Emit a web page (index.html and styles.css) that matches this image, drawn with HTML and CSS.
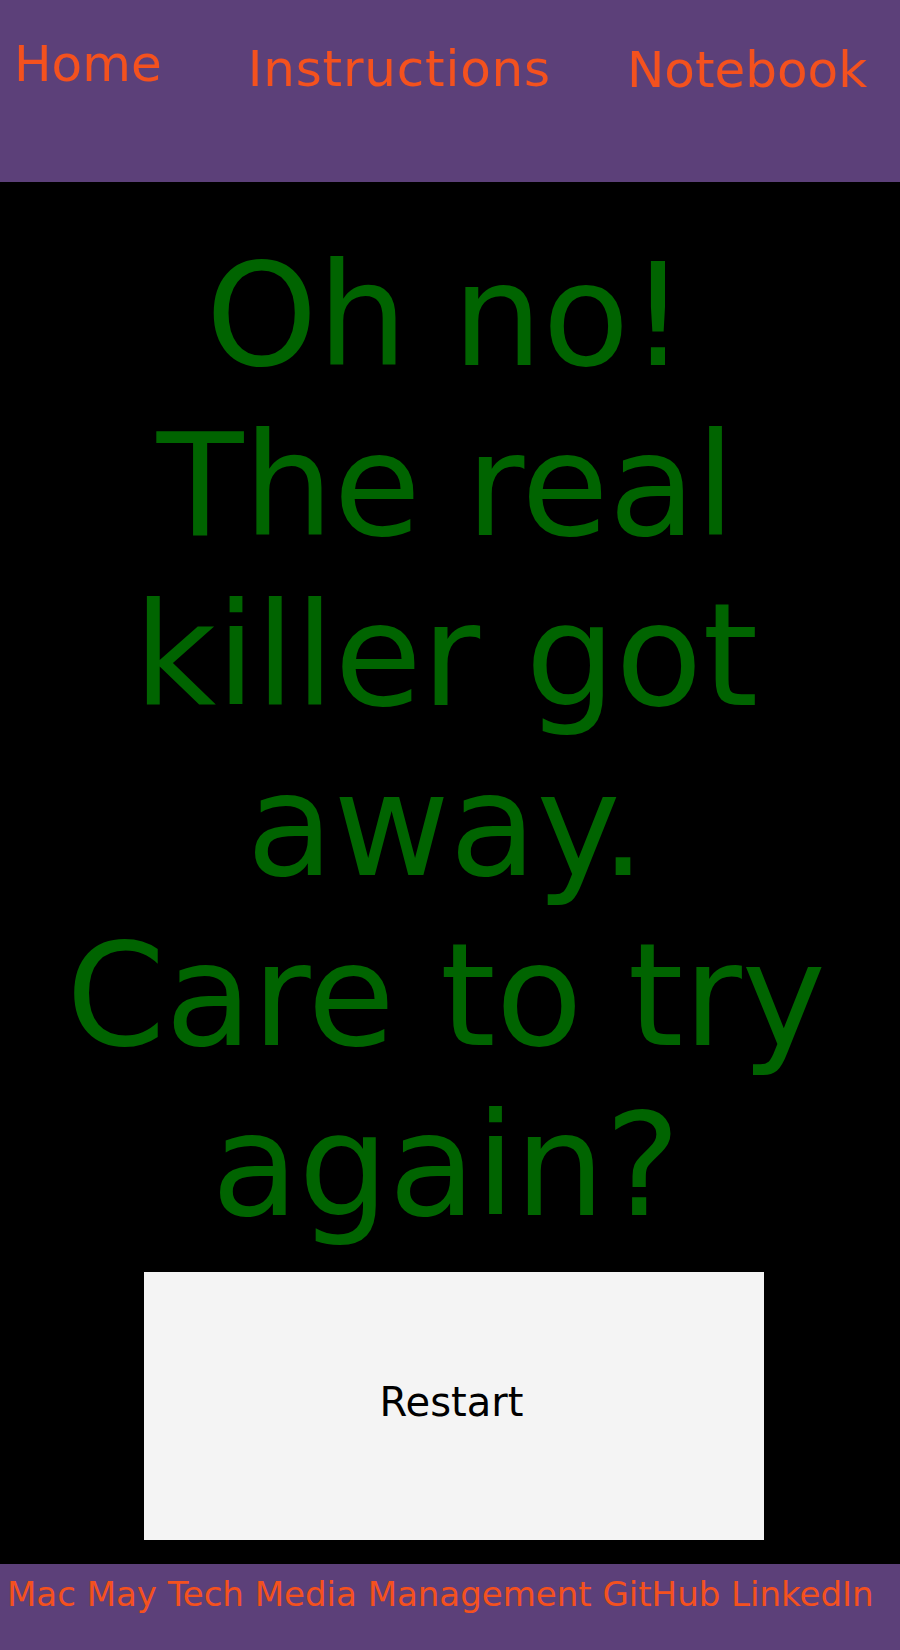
FILE: index.html
```html
<!DOCTYPE html>
<html lang="en">
<head>
<meta charset="utf-8">
<title>Game Over</title>
<link rel="stylesheet" href="styles.css">
</head>
<body>
<header class="nav">
  <a class="nav-link nav-home" href="#">Home</a>
  <a class="nav-link nav-instructions" href="#">Instructions</a>
  <a class="nav-link nav-notebook" href="#">Notebook</a>
</header>
<main class="content">
  <h1 class="message">Oh no!<br>The real killer got away.<br>Care to try again?</h1>
  <button class="restart" type="button">Restart</button>
</main>
<footer class="footer">
  <a class="footer-link" href="#">Mac May Tech Media Management</a> <a class="footer-link" href="#">GitHub</a> <a class="footer-link" href="#">LinkedIn</a>
</footer>
</body>
</html>
```
FILE: styles.css
```css
html, body {
  margin: 0;
  padding: 0;
}
body {
  background: #000000;
  font-family: "DejaVu Sans", Verdana, sans-serif;
}
.nav {
  height: 182px;
  background: #5c4079;
  display: flex;
  align-items: flex-start;
}
.nav-link {
  color: #f4511e;
  text-decoration: none;
  font-size: 50px;
  line-height: normal;
}
.nav-home {
  margin-left: 14px;
  padding-top: 35px;
}
.nav-instructions {
  margin-left: 86px;
  padding-top: 40px;
  letter-spacing: 0.8px;
}
.nav-notebook {
  margin-left: 76px;
  padding-top: 41px;
}
.content {
  display: flex;
  flex-direction: column;
  align-items: flex-start;
}
.message {
  align-self: stretch;
  margin: 49px 8px 0 0;
  color: #006400;
  font-weight: normal;
  font-size: 142px;
  line-height: 170px;
  text-align: center;
}
.restart {
  box-sizing: border-box;
  width: 620px;
  margin: 21px 0 24px 144px;
  padding: 107px 5px 114px 0;
  border: none;
  background: #f4f4f4;
  color: #000000;
  font-family: "DejaVu Sans", Verdana, sans-serif;
  font-size: 40px;
  line-height: 47px;
}
.footer {
  box-sizing: border-box;
  height: 86px;
  padding: 10px 0 0 7px;
  background: #5c4079;
  font-size: 34px;
  line-height: normal;
  white-space: nowrap;
}
.footer-link {
  color: #f4511e;
  text-decoration: none;
}
```
